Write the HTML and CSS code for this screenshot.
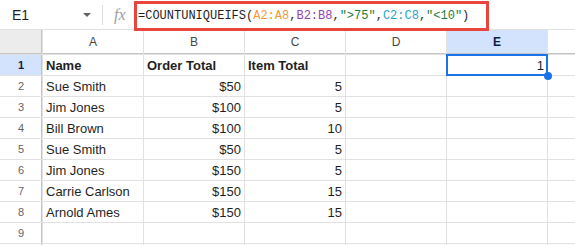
FILE: index.html
```html
<!DOCTYPE html>
<html lang="en">
<head>
<meta charset="UTF-8" />
<title>COUNTUNIQUEIFS</title>
<link rel="stylesheet" href="styles.css">
</head>
<body>
  <div class="formula-bar">
    <div class="name-box">
      <span class="cell-ref">E1</span>
      <span class="caret"></span>
    </div>
    <span class="fx">fx</span>
    <div class="formula">=COUNTUNIQUEIFS(<span class="r1">A2:A8</span>,<span class="r2">B2:B8</span>,<span class="str">"&gt;75"</span>,<span class="r3">C2:C8</span>,<span class="str">"&lt;10"</span>)</div>
  </div>

  <div class="sheet">
    <!-- column headers -->
    <div class="corner"></div>
    <div class="col-head">A</div>
    <div class="col-head">B</div>
    <div class="col-head">C</div>
    <div class="col-head">D</div>
    <div class="col-head active">E</div>
    <div class="col-head"></div>

    <div class="row-head active">1</div>
    <div class="cell bold">Name</div>
    <div class="cell bold">Order Total</div>
    <div class="cell bold">Item Total</div>
    <div class="cell"></div>
    <div class="cell num selected">1</div>
    <div class="cell"></div>

    <div class="row-head">2</div>
    <div class="cell">Sue Smith</div>
    <div class="cell num">$50</div>
    <div class="cell num">5</div>
    <div class="cell"></div><div class="cell"></div><div class="cell"></div>

    <div class="row-head">3</div>
    <div class="cell">Jim Jones</div>
    <div class="cell num">$100</div>
    <div class="cell num">5</div>
    <div class="cell"></div><div class="cell"></div><div class="cell"></div>

    <div class="row-head">4</div>
    <div class="cell">Bill Brown</div>
    <div class="cell num">$100</div>
    <div class="cell num">10</div>
    <div class="cell"></div><div class="cell"></div><div class="cell"></div>

    <div class="row-head">5</div>
    <div class="cell">Sue Smith</div>
    <div class="cell num">$50</div>
    <div class="cell num">5</div>
    <div class="cell"></div><div class="cell"></div><div class="cell"></div>

    <div class="row-head">6</div>
    <div class="cell">Jim Jones</div>
    <div class="cell num">$150</div>
    <div class="cell num">5</div>
    <div class="cell"></div><div class="cell"></div><div class="cell"></div>

    <div class="row-head">7</div>
    <div class="cell">Carrie Carlson</div>
    <div class="cell num">$150</div>
    <div class="cell num">15</div>
    <div class="cell"></div><div class="cell"></div><div class="cell"></div>

    <div class="row-head">8</div>
    <div class="cell">Arnold Ames</div>
    <div class="cell num">$150</div>
    <div class="cell num">15</div>
    <div class="cell"></div><div class="cell"></div><div class="cell"></div>

    <div class="row-head">9</div>
    <div class="cell"></div><div class="cell"></div><div class="cell"></div>
    <div class="cell"></div><div class="cell"></div><div class="cell"></div>

    <div class="row-head"></div>
    <div class="cell"></div><div class="cell"></div><div class="cell"></div>
    <div class="cell"></div><div class="cell"></div><div class="cell"></div>
  </div>
</body>
</html>
```

FILE: styles.css
```css
html, body {
  margin: 0;
  height: 245px;
  overflow: hidden;
  background: #ffffff;
  font-family: "Liberation Sans", Arial, sans-serif;
  color: #1f1f1f;
}

.formula-bar {
  display: flex;
  align-items: center;
  height: 29px;
  border-bottom: 1px solid #e1e1e1;
}

.name-box {
  display: flex;
  align-items: center;
  width: 103px;
  height: 20px;
  border-right: 1px solid #dadce0;
  box-sizing: border-box;
}

.cell-ref {
  margin-left: 12px;
  font-size: 14px;
  width: 71px;
}

.caret {
  width: 0;
  height: 0;
  border-left: 4px solid transparent;
  border-right: 4px solid transparent;
  border-top: 4px solid #5f6368;
}

.fx {
  margin-left: 11px;
  font-family: "Liberation Serif", serif;
  font-style: italic;
  font-size: 16px;
  color: #9aa0a6;
  width: 20px;
}

.formula {
  position: relative;
  z-index: 2;
  align-self: flex-start;
  margin-top: 1px;
  height: 30px;
  width: 355px;
  box-sizing: border-box;
  border: 3px solid #e8453c;
  padding: 3px 0 0 1px;
  font-family: "Liberation Mono", monospace;
  font-size: 12px;
  line-height: 18px;
  color: #1f1f1f;
  white-space: nowrap;
}

.r1 { color: #f29a38; }
.r2 { color: #9443b8; }
.r3 { color: #1ea6c9; }
.str { color: #188038; }

.sheet {
  display: grid;
  grid-template-columns: 42px repeat(5, 100px) 1fr;
  grid-template-rows: 24px repeat(9, 20px) 1px;
  gap: 1px;
  background: #e1e1e1;
}

.corner {
  background: #ececec;
  box-shadow: inset -1px -1px #c4c4c4;
}

.col-head {
  background: #ffffff;
  font-size: 12px;
  color: #444746;
  display: flex;
  align-items: center;
  justify-content: center;
  box-shadow: inset 0 -1px #c4c4c4;
}

.row-head {
  background: #ffffff;
  font-size: 11px;
  color: #5f6368;
  display: flex;
  align-items: center;
  justify-content: center;
  box-shadow: inset -1px 0 #c4c4c4;
}

.col-head.active,
.row-head.active {
  background: #d3e3fd;
  color: #0b1f4a;
  font-weight: bold;
}

.cell {
  background: #ffffff;
  font-size: 13px;
  line-height: 20px;
  padding: 1px 3px 0;
  white-space: nowrap;
  overflow: hidden;
}

.cell.bold {
  font-weight: bold;
}

.cell.num {
  text-align: right;
}

.cell.selected {
  position: relative;
  overflow: visible;
}

.cell.selected::after {
  content: "";
  position: absolute;
  left: -1px;
  top: -1px;
  right: -1px;
  bottom: -1px;
  border: 2px solid #1a73e8;
}

.cell.selected::before {
  content: "";
  position: absolute;
  right: -5px;
  bottom: -5px;
  width: 8px;
  height: 8px;
  border-radius: 50%;
  background: #1a73e8;
  z-index: 1;
}
```
